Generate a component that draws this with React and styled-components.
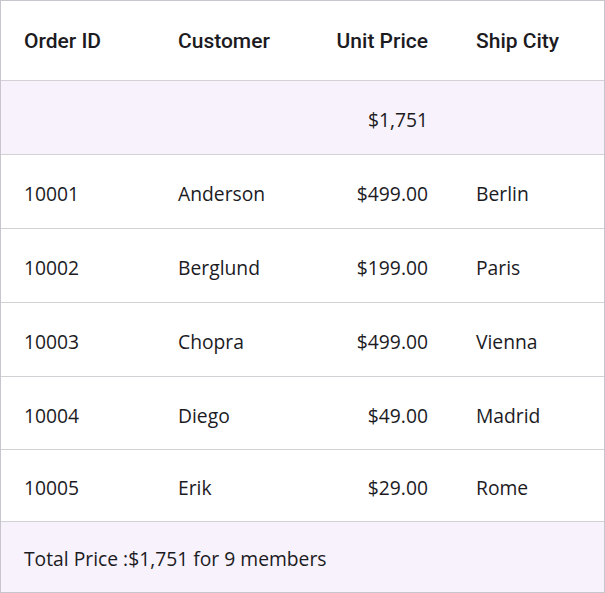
import React from 'react';
import styled, { createGlobalStyle } from 'styled-components';

const GlobalStyle = createGlobalStyle`
  html, body {
    margin: 0;
    padding: 0;
    background: #ffffff;
  }
`;

const Grid = styled.div`
  width: 605px;
  height: 593px;
  box-sizing: border-box;
  border: 1px solid #c8c5cc;
  display: flex;
  flex-direction: column;
  font-family: "Segoe UI", "Open Sans", "Noto Sans", sans-serif;
  color: #1c1b1f;
  background: #ffffff;
`;

const Row = styled.div`
  box-sizing: border-box;
  display: grid;
  grid-template-columns: 154px 149px 149px 1fr;
  align-items: center;
  height: ${(p) => p.$h}px;
  flex-shrink: 0;
  background: ${(p) => (p.$tint ? '#f7f2fb' : '#ffffff')};
  border-bottom: ${(p) => (p.$last ? 'none' : '1px solid #d3d0d6')};
`;

const HeadCell = styled.div`
  font-family: Roboto, "Noto Sans", sans-serif;
  font-weight: 500;
  font-size: 21px;
  padding: 1px 25px 0 23px;
  text-align: ${(p) => (p.$right ? 'right' : 'left')};
  white-space: nowrap;
`;

const Cell = styled.div`
  font-size: 19.3px;
  padding: 4px 25px 0 23px;
  text-align: ${(p) => (p.$right ? 'right' : 'left')};
  white-space: nowrap;
`;

const FooterCell = styled.div`
  grid-column: 1 / -1;
  font-size: 19.3px;
  padding: 2px 23px 0;
  white-space: nowrap;
`;

const orders = [
  { id: '10001', customer: 'Anderson', price: '$499.00', city: 'Berlin' },
  { id: '10002', customer: 'Berglund', price: '$199.00', city: 'Paris' },
  { id: '10003', customer: 'Chopra', price: '$499.00', city: 'Vienna' },
  { id: '10004', customer: 'Diego', price: '$49.00', city: 'Madrid' },
  { id: '10005', customer: 'Erik', price: '$29.00', city: 'Rome' },
];

const heights = [74, 74, 74, 73, 72];

export default function App() {
  return (
    <>
      <GlobalStyle />
      <Grid>
        <Row $h={80}>
          <HeadCell>Order ID</HeadCell>
          <HeadCell>Customer</HeadCell>
          <HeadCell $right>Unit Price</HeadCell>
          <HeadCell>Ship City</HeadCell>
        </Row>
        <Row $h={74} $tint>
          <Cell />
          <Cell />
          <Cell $right>$1,751</Cell>
          <Cell />
        </Row>
        {orders.map((o, i) => (
          <Row key={o.id} $h={heights[i]}>
            <Cell>{o.id}</Cell>
            <Cell>{o.customer}</Cell>
            <Cell $right>{o.price}</Cell>
            <Cell>{o.city}</Cell>
          </Row>
        ))}
        <Row $h={70} $tint $last>
          <FooterCell>Total Price :$1,751 for 9 members</FooterCell>
        </Row>
      </Grid>
    </>
  );
}
